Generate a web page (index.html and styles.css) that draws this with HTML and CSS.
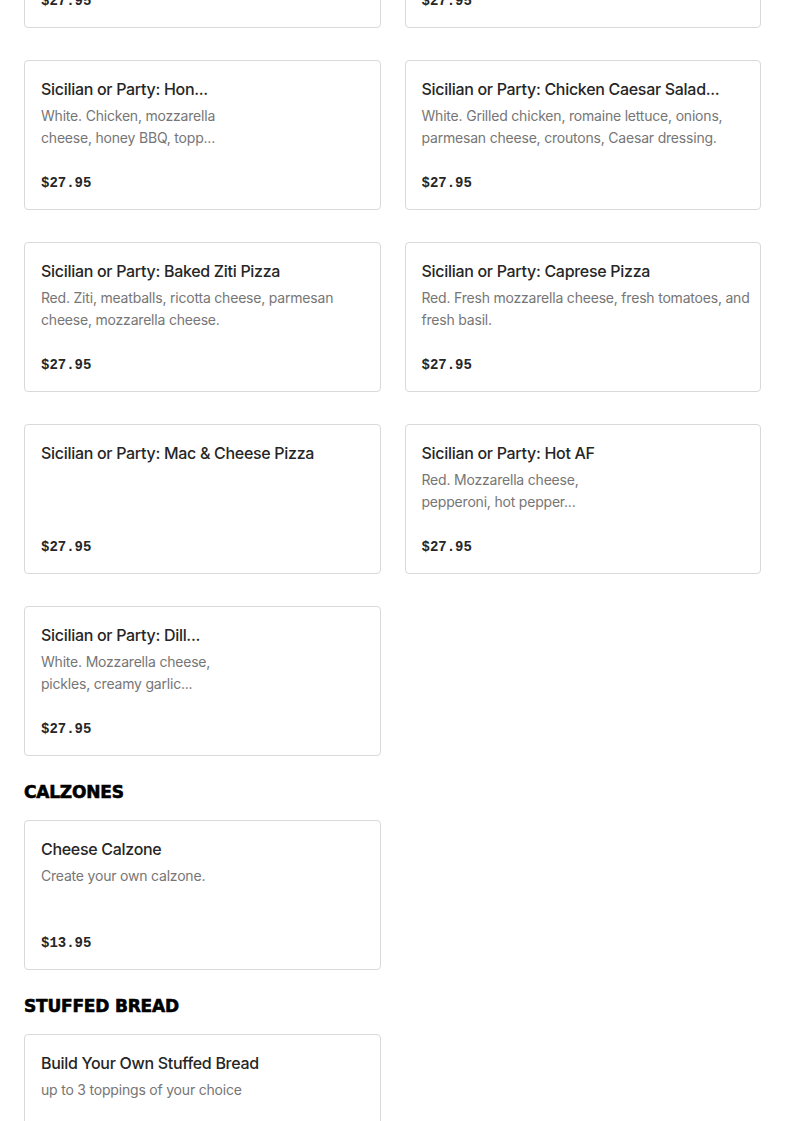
FILE: index.html
```html
<!DOCTYPE html>
<html lang="en">
<head>
<meta charset="utf-8">
<title>Menu</title>
<link rel="stylesheet" href="styles.css">
</head>
<body>
<main class="menu">
  <section class="section section-first">
    <div class="grid">
      <article class="card">
        <h3 class="title">Sicilian or Party: Meat Lovers Pizza</h3>
        <p class="desc">Red. Pepperoni, sausage, meatballs, bacon, mozzarella cheese.</p>
        <p class="price">$27.95</p>
      </article>
      <article class="card">
        <h3 class="title">Sicilian or Party: Veggie Pizza</h3>
        <p class="desc">Red. Peppers, onions, mushrooms, olives, mozzarella cheese.</p>
        <p class="price">$27.95</p>
      </article>
      <article class="card">
        <h3 class="title">Sicilian or Party: Hon...</h3>
        <p class="desc narrow">White. Chicken, mozzarella cheese, honey BBQ, topp...</p>
        <p class="price">$27.95</p>
      </article>
      <article class="card">
        <h3 class="title">Sicilian or Party: Chicken Caesar Salad...</h3>
        <p class="desc">White. Grilled chicken, romaine lettuce, onions, parmesan cheese, croutons, Caesar dressing.</p>
        <p class="price">$27.95</p>
      </article>
      <article class="card">
        <h3 class="title">Sicilian or Party: Baked Ziti Pizza</h3>
        <p class="desc">Red. Ziti, meatballs, ricotta cheese, parmesan cheese, mozzarella cheese.</p>
        <p class="price">$27.95</p>
      </article>
      <article class="card">
        <h3 class="title">Sicilian or Party: Caprese Pizza</h3>
        <p class="desc">Red. Fresh mozzarella cheese, fresh tomatoes, and fresh basil.</p>
        <p class="price">$27.95</p>
      </article>
      <article class="card">
        <h3 class="title">Sicilian or Party: Mac &amp; Cheese Pizza</h3>
        <p class="price">$27.95</p>
      </article>
      <article class="card">
        <h3 class="title">Sicilian or Party: Hot AF</h3>
        <p class="desc narrow">Red. Mozzarella cheese, pepperoni, hot pepper...</p>
        <p class="price">$27.95</p>
      </article>
      <article class="card">
        <h3 class="title">Sicilian or Party: Dill...</h3>
        <p class="desc narrow">White. Mozzarella cheese, pickles, creamy garlic...</p>
        <p class="price">$27.95</p>
      </article>
    </div>
  </section>

  <section class="section">
    <h2 class="heading">CALZONES</h2>
    <div class="grid">
      <article class="card">
        <h3 class="title">Cheese Calzone</h3>
        <p class="desc">Create your own calzone.</p>
        <p class="price">$13.95</p>
      </article>
    </div>
  </section>

  <section class="section">
    <h2 class="heading">STUFFED BREAD</h2>
    <div class="grid">
      <article class="card">
        <h3 class="title">Build Your Own Stuffed Bread</h3>
        <p class="desc">up to 3 toppings of your choice</p>
        <p class="price">$13.95</p>
      </article>
    </div>
  </section>
</main>
</body>
</html>
```

FILE: styles.css
```css
* { box-sizing: border-box; }

html, body {
  margin: 0;
  padding: 0;
  background: #ffffff;
}

body {
  font-family: Inter, "Liberation Sans", Arial, sans-serif;
  color: #2b2b2b;
  overflow: hidden;
}

.menu {
  padding: 0 24px;
}

.section-first {
  margin-top: -122px;
}

.section {
  margin-bottom: 24px;
}

.heading {
  margin: 0 0 16px;
  font-family: "DejaVu Sans", "Liberation Sans", sans-serif;
  font-weight: 700;
  font-size: 17px;
  line-height: 24px;
  letter-spacing: -0.2px;
  color: #000000;
  -webkit-text-stroke: 0.6px #000000;
}

.grid {
  display: grid;
  grid-template-columns: 1fr 1fr;
  column-gap: 24px;
  row-gap: 32px;
}

.card {
  height: 150px;
  border: 1px solid #d9d9d9;
  border-radius: 4px;
  padding: 16px 16px 16px;
  display: flex;
  flex-direction: column;
}

.title {
  margin: 0;
  font-size: 16px;
  line-height: 24px;
  font-weight: 500;
  letter-spacing: -0.3px;
  color: #262626;
  white-space: nowrap;
  overflow: hidden;
}

.desc {
  margin: 4px -9px 0 0;
  font-size: 14px;
  line-height: 22px;
  letter-spacing: -0.2px;
  color: #767676;
}

.desc.narrow {
  max-width: 200px;
}

.price {
  margin: auto 0 0;
  font-family: "Liberation Mono", "DejaVu Sans Mono", monospace;
  font-weight: 700;
  font-size: 14px;
  line-height: 20px;
  color: #262626;
}
```
